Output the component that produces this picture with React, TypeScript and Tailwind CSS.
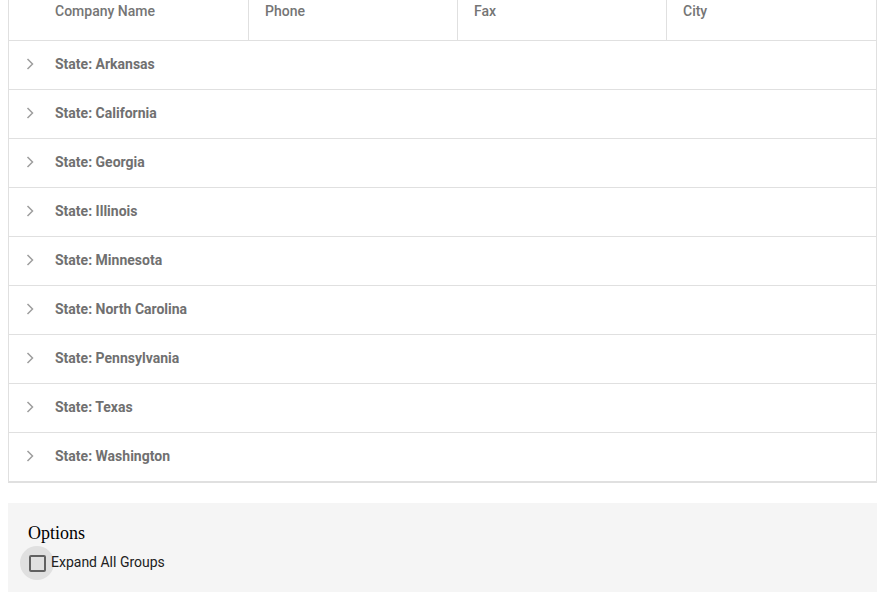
import React from "react";

const states = [
  "Arkansas",
  "California",
  "Georgia",
  "Illinois",
  "Minnesota",
  "North Carolina",
  "Pennsylvania",
  "Texas",
  "Washington",
];

function Chevron() {
  return (
    <svg width="16" height="16" viewBox="0 0 16 16" className="shrink-0">
      <path d="M5.5 3 L10.5 8 L5.5 13" fill="none" stroke="#9e9e9e" strokeWidth="1.5" />
    </svg>
  );
}

export default function App() {
  return (
    <div className="px-2 bg-white" style={{ fontFamily: "Roboto, 'Liberation Sans', sans-serif" }}>
      <div className="border-l border-r border-b-2 border-[#e0e0e0]">
        <div className="flex h-[41px] border-b border-[#e0e0e0] text-[14px] font-medium text-[#757575] leading-[18px]">
          <div className="w-[240px] pl-[46px] pt-[2px] border-r border-[#e0e0e0]">Company Name</div>
          <div className="w-[209px] pl-[16px] pt-[2px] border-r border-[#e0e0e0]">Phone</div>
          <div className="w-[209px] pl-[16px] pt-[2px] border-r border-[#e0e0e0]">Fax</div>
          <div className="flex-1 pl-[16px] pt-[2px]">City</div>
        </div>
        {states.map((s, i) => (
          <div
            key={s}
            className={
              "flex items-center text-[14px] font-bold text-[#707070] " +
              (i < states.length - 1 ? "h-[49px] border-b border-[#e0e0e0]" : "h-[48px]")
            }
          >
            <div className="w-[46px] pl-[13px] flex items-center -mt-[2px]">
              <Chevron />
            </div>
            <span className="-mt-[2px]">State: {s}</span>
          </div>
        ))}
      </div>
      <div className="mt-[20px] bg-[#f5f5f5] h-[89px] pl-[20px] pt-[18px]">
        <div
          className="text-[18px] leading-[24px] text-black"
          style={{ fontFamily: "'Liberation Serif', 'Times New Roman', serif" }}
        >
          Options
        </div>
        <label className="flex items-center mt-[1px] -ml-[8px]">
          <span className="w-[34px] h-[34px] rounded-full bg-[#e0e0e0] flex items-center justify-center">
            <span className="w-[17px] h-[17px] border-2 border-[#616161] rounded-[2px]"></span>
          </span>
          <span className="relative text-[14px] text-[#212121] -ml-[3px] -mt-[1px]">Expand All Groups</span>
        </label>
      </div>
    </div>
  );
}
